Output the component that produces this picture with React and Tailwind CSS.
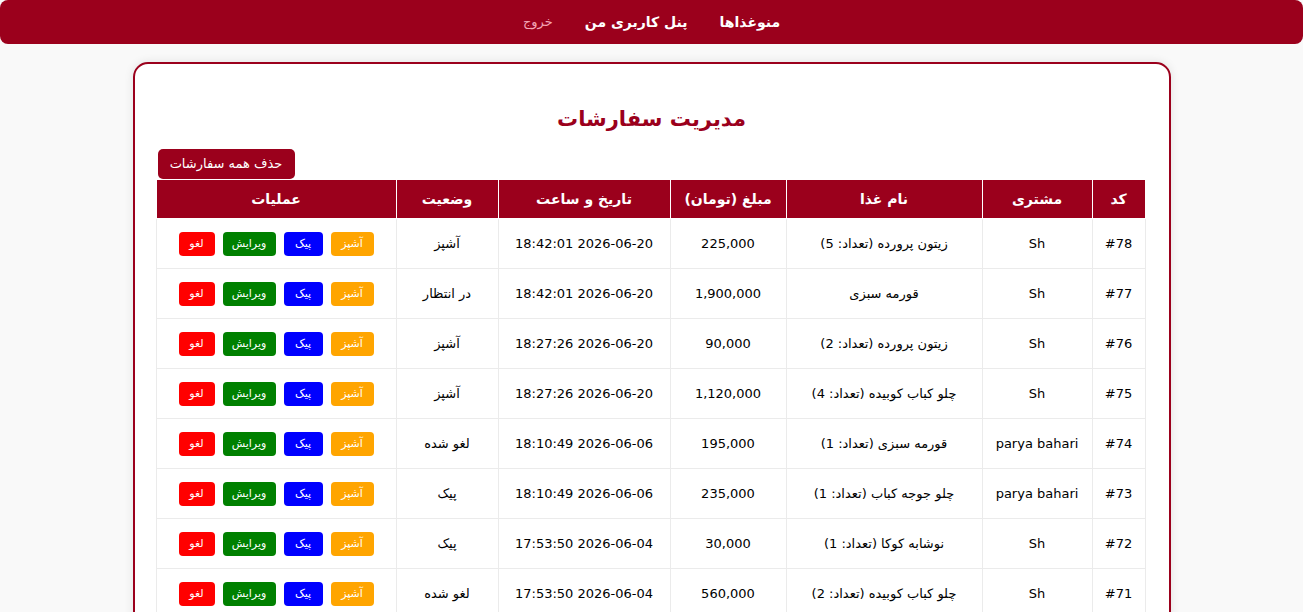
import React from "react";

const rows = [
  ["#78", "Sh", "زیتون پرورده (تعداد: 5)", "225,000", "2026-06-20 18:42:01", "آشپز"],
  ["#77", "Sh", "قورمه سبزی", "1,900,000", "2026-06-20 18:42:01", "در انتظار"],
  ["#76", "Sh", "زیتون پرورده (تعداد: 2)", "90,000", "2026-06-20 18:27:26", "آشپز"],
  ["#75", "Sh", "چلو کباب کوبیده (تعداد: 4)", "1,120,000", "2026-06-20 18:27:26", "آشپز"],
  ["#74", "parya bahari", "قورمه سبزی (تعداد: 1)", "195,000", "2026-06-06 18:10:49", "لغو شده"],
  ["#73", "parya bahari", "چلو جوجه کباب (تعداد: 1)", "235,000", "2026-06-06 18:10:49", "پیک"],
  ["#72", "Sh", "نوشابه کوکا (تعداد: 1)", "30,000", "2026-06-04 17:53:50", "پیک"],
  ["#71", "Sh", "چلو کباب کوبیده (تعداد: 2)", "560,000", "2026-06-04 17:53:50", "لغو شده"],
];

const headers = [
  ["کد", "w-[53px]"],
  ["مشتری", "w-[110px]"],
  ["نام غذا", "w-[196px]"],
  ["مبلغ (تومان)", "w-[116px]"],
  ["تاریخ و ساعت", "w-[172px]"],
  ["وضعیت", "w-[102px]"],
  ["عملیات", "w-[240px]"],
];

function Btn({ cls, children }) {
  return (
    <button className={`h-[24px] rounded-[4px] text-[11px] text-white leading-none flex items-center justify-center ${cls}`}>
      {children}
    </button>
  );
}

export default function App() {
  return (
    <div
      dir="rtl"
      className="min-h-screen bg-[#f9f9f9] text-black"
      style={{ fontFamily: '"DejaVu Sans", Tahoma, sans-serif' }}
    >
      <nav className="h-[44px] w-full bg-[#9b001c] rounded-[8px] flex items-center justify-center gap-[32px] text-[14px]">
        <a className="text-white font-bold">منوغذاها</a>
        <a className="text-white font-bold">پنل کاربری من</a>
        <a className="text-[#f4a6b6] text-[13px]">خروج</a>
      </nav>

      <div className="w-[1038px] mx-auto mt-[18px] bg-white border-2 border-[#9b001c] rounded-[15px] shadow-[0_0_10px_rgba(0,0,0,0.1)] px-[23px] pt-[37px] pb-[23px]">
        <h2 className="text-center text-[#9b001c] font-bold text-[21px] leading-[36px]">مدیریت سفارشات</h2>
        <div className="flex justify-end mt-[12px]">
          <button className="h-[30px] w-[137px] bg-[#9b001c] text-white text-[13px] rounded-[5px]">
            حذف همه سفارشات
          </button>
        </div>
        <table className="w-full border-collapse table-fixed">
          <thead>
            <tr className="bg-[#9b001c] text-white h-[39px]">
              {headers.map(([h, w]) => (
                <th key={h} className={`${w} border border-white font-bold text-[14px] text-center`}>
                  {h}
                </th>
              ))}
            </tr>
          </thead>
          <tbody className="text-[13px]">
            {rows.map((r) => (
              <tr key={r[0]} className="h-[50px]">
                {r.map((c, i) => (
                  <td key={i} className="border border-[#ebebeb] text-center">
                    {c}
                  </td>
                ))}
                <td className="border border-[#ebebeb] text-center">
                  <div className="flex justify-center gap-[8px]">
                    <Btn cls="w-[43px] bg-[#ffa500]">آشپز</Btn>
                    <Btn cls="w-[39px] bg-[#0000ff]">پیک</Btn>
                    <Btn cls="w-[53px] bg-[#008000]">ویرایش</Btn>
                    <Btn cls="w-[36px] bg-[#ff0000]">لغو</Btn>
                  </div>
                </td>
              </tr>
            ))}
          </tbody>
        </table>
      </div>
    </div>
  );
}
